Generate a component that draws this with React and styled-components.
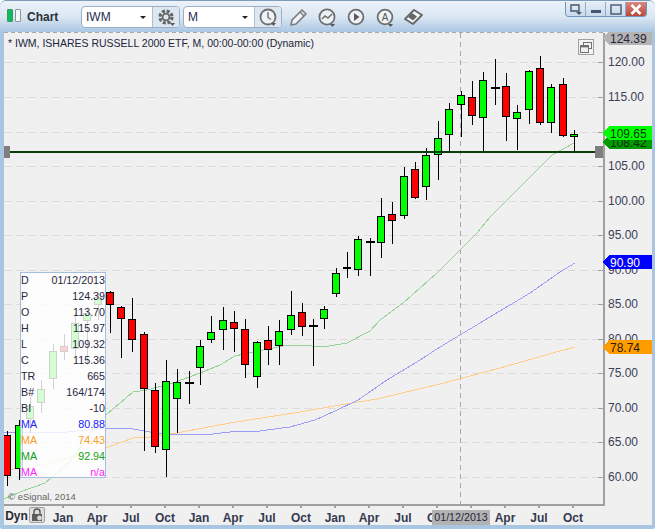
import styled, { createGlobalStyle } from "styled-components";

const UP = "#00ff00";
const DOWN = "#ff0000";

// x, wick top, body top, body bottom, wick bottom, colour (page pixels)
const candles = [
  [7, 431, 435, 476, 486, DOWN],
  [19, 420, 425, 469, 480, UP],
  [30, 397, 406, 419, 433, UP],
  [41, 380, 389, 403, 413, UP],
  [53, 344, 351, 379, 389, UP],
  [64, 334, 346, 352, 360, DOWN],
  [75, 313, 323, 349, 357, UP],
  [87, 307, 313, 321, 365, UP],
  [98, 293, 297, 305, 320, UP],
  [110, 291, 292, 305, 333, DOWN],
  [121, 306, 307, 319, 358, DOWN],
  [132, 298, 319, 340, 352, DOWN],
  [144, 332, 334, 389, 451, DOWN],
  [155, 383, 390, 447, 453, DOWN],
  [166, 360, 381, 450, 477, UP],
  [177, 369, 382, 399, 433, UP],
  [189, 371, 383, 383, 404, UP],
  [200, 340, 346, 368, 385, UP],
  [211, 316, 332, 340, 343, UP],
  [223, 307, 320, 330, 350, UP],
  [234, 311, 322, 329, 352, DOWN],
  [245, 319, 329, 365, 378, DOWN],
  [257, 341, 342, 377, 388, UP],
  [268, 326, 340, 350, 365, DOWN],
  [279, 320, 331, 346, 365, UP],
  [291, 291, 315, 330, 335, UP],
  [302, 303, 312, 327, 336, DOWN],
  [313, 319, 326, 326, 366, UP],
  [324, 306, 309, 319, 329, UP],
  [336, 268, 273, 294, 297, UP],
  [347, 252, 267, 269, 278, UP],
  [358, 236, 239, 270, 276, UP],
  [370, 238, 242, 242, 276, UP],
  [381, 198, 216, 243, 258, UP],
  [392, 202, 214, 221, 244, DOWN],
  [404, 167, 176, 216, 219, UP],
  [415, 162, 169, 198, 199, DOWN],
  [426, 148, 155, 187, 200, UP],
  [438, 121, 138, 155, 180, UP],
  [449, 103, 109, 135, 152, UP],
  [461, 91, 95, 105, 137, UP],
  [472, 81, 97, 116, 125, DOWN],
  [483, 72, 80, 118, 152, UP],
  [495, 59, 88, 88, 105, UP],
  [506, 73, 86, 117, 141, DOWN],
  [517, 105, 112, 119, 150, UP],
  [529, 70, 71, 110, 124, UP],
  [540, 56, 68, 123, 125, DOWN],
  [551, 84, 87, 123, 133, UP],
  [563, 78, 84, 136, 137, DOWN],
  [574, 130, 134, 137, 152, UP],
];

const greenMa = "4,499 20,492 45,483 70,462 100,420 133,392 147,390 173,383 200,373 220,365 235,356 253,352 283,346 300,345 323,347 347,343 370,331 380,320 403,303 420,288 437,273 460,250 477,233 490,217 527,180 552,155 574,143";
const blueMa = "4,432 67,432 107,428 133,429 150,432 162,434 190,435 213,434 230,432 260,431 290,427 315,420 335,411 358,400 387,380 420,360 440,347 480,323 530,293 560,272 575,263";
const orangeMa = "3,470 33,467 100,450 133,438 150,437 177,433 203,428 230,423 300,412 340,405 377,399 440,384 500,368 560,351 575,347";

const levels = [120, 115, 110, 105, 100, 95, 90, 85, 80, 75, 70, 65, 60];
const levelY = (p) => Math.round(477 - (p - 60) * 6.91);

const flags = [
  { value: "124.39", y: 38, fill: "#b4b4b4", text: "#26263c" },
  { value: "108.42", y: 142, fill: "#009c00", text: "#10300a" },
  { value: "109.65", y: 133, fill: "#00ff00", text: "#10300a" },
  { value: "90.90", y: 262, fill: "#0000ff", text: "#ffffff" },
  { value: "78.74", y: 347, fill: "#ff9c00", text: "#2a1c00" },
];

const readout = [
  ["D", "01/12/2013"],
  ["P", "124.39"],
  ["O", "113.70"],
  ["H", "115.97"],
  ["L", "109.32"],
  ["C", "115.36"],
  ["TR", "665"],
  ["B#", "164/174"],
  ["BI", "-10"],
  ["MA", "80.88", "#2020ff"],
  ["MA", "74.43", "#ff9c20"],
  ["MA", "92.94", "#10a010"],
  ["MA", "n/a", "#ff20ff"],
];

const months = ["Jan", "Apr", "Jul", "Oct", "Jan", "Apr", "Jul", "Oct", "Jan", "Apr", "Jul", "Oct", "Jan", "Apr", "Jul", "Oct"];

const Candle = ({ data }) => {
  const [x, wickTop, bodyTop, bodyBottom, wickBottom, colour] = data;
  const cx = x + 0.5;
  return (
    <g>
      <line x1={cx} x2={cx} y1={wickTop} y2={wickBottom} stroke="#000" strokeWidth="1" />
      {bodyTop === bodyBottom ? (
        <rect x={x - 4} y={bodyTop - 1} width="9" height="2" fill="#000" />
      ) : (
        <rect x={x - 3.5} y={bodyTop + 0.5} width="7" height={bodyBottom - bodyTop - 1} fill={colour} stroke="#000" strokeWidth="1" />
      )}
    </g>
  );
};

const Flag = ({ value, y, fill, text }) => (
  <g>
    <polygon points={`603,${y} 609,${y - 7} 652,${y - 7} 652,${y + 7} 609,${y + 7}`} fill={fill} />
    <text x="610" y={y + 4.5} fill={text} fontSize="12">{value}</text>
  </g>
);

const PriceChart = () => (
  <PlotSvg viewBox="4 32 648 474" width="648" height="474" shapeRendering="crispEdges" fontFamily="Liberation Sans, Arial, sans-serif">
    {levels.map((p) => (
      <line key={p} x1="4" x2="603" y1={levelY(p) + 0.5} y2={levelY(p) + 0.5} stroke="#dcdcdc" strokeWidth="1" strokeDasharray="8 4" />
    ))}
    <line x1="4" x2="603" y1="32.5" y2="32.5" stroke="#a8a8a8" strokeDasharray="4 3" />
    <line x1="460.5" x2="460.5" y1="33" y2="505" stroke="#a8a8a8" strokeDasharray="5 4" />
    <g fill="none" strokeWidth="1">
      <polyline points={orangeMa} stroke="#ffcc8a" />
      <polyline points={blueMa} stroke="#9c9cf2" />
      <polyline points={greenMa} stroke="#96d296" />
    </g>
    {candles.map((c) => <Candle key={c[0]} data={c} />)}
    <rect x="4" y="151" width="599" height="2" fill="#0a3d0a" />
    <rect x="4" y="146" width="6" height="12" fill="#7f7f7f" />
    <rect x="595" y="146" width="8" height="12" fill="#7f7f7f" />
    <rect x="603" y="33" width="2" height="473" fill="#a0a0a0" />
    <rect x="4" y="504" width="600" height="2" fill="#a0a0a0" />
    {levels.map((p) => (
      <g key={p}>
        <line x1="598" x2="603" y1={levelY(p) + 0.5} y2={levelY(p) + 0.5} stroke="#a0a0a0" />
        <text x="608" y={levelY(p) + 4} fill="#3a3f58" fontSize="12">{p}.00</text>
      </g>
    ))}
    {flags.map((f) => <Flag key={f.value} {...f} />)}
  </PlotSvg>
);

const App = () => (
  <>
    <GlobalStyle />
    <Window>
      <TitleBar>
        <Lights>
          <Light $on />
          <Light />
        </Lights>
        <Title>Chart</Title>
        <ComboGroup>
          <Combo>
            <ComboValue>IWM</ComboValue>
            <Caret />
          </Combo>
          <ComboButton>
            <svg width="20" height="20" viewBox="0 0 20 20">
              <circle cx="10" cy="10" r="6" fill="none" stroke="#666" strokeWidth="3.2" strokeDasharray="3 1.7" />
              <circle cx="10" cy="10" r="3.4" fill="none" stroke="#666" strokeWidth="1.8" />
              <path d="M14 16h5l-2.5 3z" fill="#555" />
            </svg>
          </ComboButton>
        </ComboGroup>
        <ComboGroup>
          <Combo>
            <ComboValue>M</ComboValue>
            <Caret />
          </Combo>
          <ComboButton>
            <svg width="20" height="20" viewBox="0 0 20 20">
              <circle cx="10" cy="10" r="7.5" fill="#eef3f8" stroke="#6e6e6e" strokeWidth="1.8" />
              <path d="M10 5v5.5l3 2" fill="none" stroke="#6e6e6e" strokeWidth="1.4" />
              <path d="M13 16h5l-2.5 3z" fill="#555" />
            </svg>
          </ComboButton>
        </ComboGroup>
        <Tools>
          <ToolIcon viewBox="0 0 20 20">
            <path d="M3 18l1-5L14 3l4 4L8 17z" fill="#eef2f6" stroke="#7a7a7a" strokeWidth="1.6" strokeLinejoin="round" />
            <path d="M12 5l4 4" stroke="#7a7a7a" strokeWidth="1.4" />
          </ToolIcon>
          <ToolIcon viewBox="0 0 20 20">
            <circle cx="10" cy="10" r="7.6" fill="#eef2f6" stroke="#6e6e6e" strokeWidth="1.8" />
            <path d="M5 12l3-3 3 2 4-4" fill="none" stroke="#6e6e6e" strokeWidth="1.5" />
            <path d="M13 17h5l-2.5 3z" fill="#555" />
          </ToolIcon>
          <ToolIcon viewBox="0 0 20 20">
            <circle cx="10" cy="10" r="7.4" fill="#eef2f6" stroke="#6e6e6e" strokeWidth="1.8" />
            <path d="M8 6l5.5 4L8 14z" fill="#5c5c5c" />
          </ToolIcon>
          <ToolIcon viewBox="0 0 20 20">
            <circle cx="10" cy="10" r="7.4" fill="#eef2f6" stroke="#6e6e6e" strokeWidth="1.8" />
            <text x="10" y="13.5" textAnchor="middle" fontSize="10" fontFamily="Liberation Sans, sans-serif" fill="#555">A</text>
            <path d="M13 17h5l-2.5 3z" fill="#555" />
          </ToolIcon>
          <ToolIcon viewBox="0 0 20 20">
            <path d="M1 12l9-9 8 5-9 9z" fill="#f4f6f8" stroke="#666" strokeWidth="1.8" strokeLinejoin="round" />
            <path d="M8 6l5 3.5-4 4-5-3.5z" fill="#666" />
          </ToolIcon>
        </Tools>
        <Caption>
          <CaptionButton>
            <svg width="12" height="11" viewBox="0 0 12 11">
              <path d="M1 1h8v6H1z" fill="none" stroke="#45566e" strokeWidth="1.4" />
              <path d="M6 8h6l-3 3z" fill="#45566e" />
            </svg>
          </CaptionButton>
          <CaptionButton>
            <svg width="12" height="11" viewBox="0 0 12 11"><rect x="1" y="6" width="10" height="3" fill="#45566e" /></svg>
          </CaptionButton>
          <CaptionButton>
            <svg width="12" height="11" viewBox="0 0 12 11">
              <rect x="1" y="1" width="10" height="9" fill="none" stroke="#45566e" strokeWidth="1.4" />
            </svg>
          </CaptionButton>
          <CloseButton>
            <svg width="14" height="11" viewBox="0 0 14 11">
              <path d="M2.5 1l9 9M11.5 1l-9 9" stroke="#fff" strokeWidth="2.6" />
            </svg>
          </CloseButton>
        </Caption>
      </TitleBar>
      <ChartBody>
        <Plot>
          <PriceChart />
          <Legend>* IWM, ISHARES RUSSELL 2000 ETF, M, 00:00-00:00 (Dynamic)</Legend>
          <RestoreButton>
            <svg width="12" height="11" viewBox="0 0 12 11">
              <rect x="3.5" y="0.5" width="8" height="6" fill="none" stroke="#707070" />
              <rect x="0.5" y="3.5" width="8" height="7" fill="#f0f0f0" stroke="#707070" />
              <rect x="1" y="4" width="7" height="1.4" fill="#707070" />
            </svg>
          </RestoreButton>
          <Readout>
            {readout.map(([label, value, colour], i) => (
              <ReadoutRow key={i} $colour={colour}>
                <span>{label}</span>
                <span>{value}</span>
              </ReadoutRow>
            ))}
          </Readout>
          <Copyright>© eSignal, 2014</Copyright>
        </Plot>
        <TimeAxis>
          <Dyn>Dyn</Dyn>
          <LockButton>
            <svg width="14" height="14" viewBox="0 0 14 14">
              <path d="M4 6V4a3 3 0 0 1 6 0v2" fill="none" stroke="#555" strokeWidth="1.4" />
              <rect x="2" y="6" width="10" height="7" fill="#5c5c5c" />
              <circle cx="9.5" cy="10" r="2.4" fill="#d8d8d8" />
            </svg>
          </LockButton>
          {months.map((m, i) => <Month key={i}>{m}</Month>)}
          <CursorDate>01/12/2013</CursorDate>
        </TimeAxis>
      </ChartBody>
    </Window>
  </>
);

const GlobalStyle = createGlobalStyle`
  html, body {
    margin: 0;
    padding: 0;
    background: #fff;
  }
  body {
    font-family: "Liberation Sans", Arial, sans-serif;
    font-size: 12px;
  }
`;

const Window = styled.div`
  width: 655px;
  height: 529px;
  box-sizing: border-box;
  display: flex;
  flex-direction: column;
  padding: 0 3px 4px 4px;
  background: #a8c5e2;
  border-top: 1px solid #7d9cba;
  border-radius: 6px 6px 2px 2px;
  overflow: hidden;
`;

const TitleBar = styled.div`
  flex: none;
  height: 31px;
  margin: 0 -3px 0 -4px;
  padding: 5px 0 0 7px;
  box-sizing: border-box;
  display: flex;
  align-items: flex-start;
  position: relative;
  background: linear-gradient(#ecf2f9 0%, #dce7f3 50%, #aac7e3 100%);
`;

const Lights = styled.div`
  display: flex;
  gap: 2px;
  margin-top: 3px;
`;

const Light = styled.div`
  width: 6px;
  height: 13px;
  box-sizing: border-box;
  border: 1px solid ${(p) => (p.$on ? "#3a9a5a" : "#8a96a4")};
  border-radius: 1px;
  background: ${(p) => (p.$on ? "#10b860" : "#f4f6f8")};
`;

const Title = styled.div`
  width: 54px;
  margin-left: 6px;
  padding-top: 4px;
  font-weight: bold;
  font-size: 12px;
  color: #2a3038;
`;

const ComboGroup = styled.div`
  display: flex;
  height: 22px;
  width: 99px;
  margin: 0 3px 0 0;
  box-sizing: border-box;
  border: 1px solid #9aaec4;
  border-radius: 4px;
  overflow: hidden;
  background: #fff;
`;

const Combo = styled.div`
  flex: 1;
  display: flex;
  align-items: center;
  justify-content: space-between;
  padding: 0 6px 0 4px;
`;

const ComboValue = styled.span`
  font-size: 12px;
  color: #262a50;
`;

const Caret = styled.span`
  width: 0;
  height: 0;
  border-left: 3px solid transparent;
  border-right: 3px solid transparent;
  border-top: 3px solid #222;
`;

const ComboButton = styled.div`
  width: 26px;
  flex: none;
  display: flex;
  align-items: center;
  justify-content: center;
  background: #dde7f2;
  border-left: 1px solid #aebfd2;
`;

const Tools = styled.div`
  display: flex;
  gap: 9px;
  margin: 1px 0 0 3px;
`;

const ToolIcon = styled.svg`
  width: 20px;
  height: 20px;
`;

const Caption = styled.div`
  position: absolute;
  top: 1px;
  right: 8px;
  display: flex;
  height: 14px;
  border: 1px solid #6f93ba;
  border-top: none;
  border-radius: 0 0 4px 4px;
  overflow: hidden;
`;

const CaptionButton = styled.div`
  width: 19px;
  display: flex;
  align-items: center;
  justify-content: center;
  background: linear-gradient(#e6eef7, #c8d9ea);
  border-right: 1px solid #8fabc8;
`;

const CloseButton = styled.div`
  width: 20px;
  display: flex;
  align-items: center;
  justify-content: center;
  background: linear-gradient(#d88a80, #b9483c);
`;

const ChartBody = styled.div`
  flex: 1;
  display: flex;
  flex-direction: column;
  background: #f0f0f0;
`;

const Plot = styled.div`
  position: relative;
  height: 474px;
  flex: none;
`;

const PlotSvg = styled.svg`
  display: block;
`;

const Legend = styled.div`
  position: absolute;
  left: 4px;
  top: 5px;
  font-size: 10.5px;
  color: #20243c;
  white-space: nowrap;
`;

const RestoreButton = styled.div`
  position: absolute;
  left: 574px;
  top: 7px;
  width: 14px;
  height: 14px;
  display: flex;
  align-items: center;
  justify-content: center;
  border: 1px solid #a0a0a0;
  background: #f4f4f4;
`;

const Readout = styled.div`
  position: absolute;
  left: 16px;
  top: 240px;
  width: 86px;
  height: 206px;
  box-sizing: border-box;
  border: 1px solid #a4bedb;
  background: rgba(255, 255, 255, 0.82);
`;

const ReadoutRow = styled.div`
  display: flex;
  justify-content: space-between;
  height: 16px;
  line-height: 15px;
  font-size: 10.7px;
  color: ${(p) => p.$colour || "#26263c"};
`;

const Copyright = styled.div`
  position: absolute;
  left: 4px;
  top: 459px;
  font-size: 9.5px;
  color: #666;
`;

const TimeAxis = styled.div`
  flex: 1;
  position: relative;
  display: flex;
  align-items: flex-start;
`;

const Dyn = styled.div`
  width: 25px;
  padding-top: 3px;
  font-weight: bold;
  font-size: 12px;
  color: #2a2a30;
  text-align: center;
`;

const LockButton = styled.div`
  width: 16px;
  height: 16px;
  margin: 1px 1px 0 0;
  display: flex;
  align-items: center;
  justify-content: center;
  border: 1px solid #a0a0a0;
  border-radius: 2px;
  box-sizing: border-box;
  background: #dedede;
`;

const Month = styled.div`
  width: 34px;
  flex: none;
  position: relative;
  padding-top: 5px;
  text-align: center;
  font-weight: bold;
  font-size: 12px;
  color: #343a50;
  &::before {
    content: "";
    position: absolute;
    left: 16px;
    top: 0;
    width: 2px;
    height: 2px;
    background: #a0a0a0;
  }
`;

const CursorDate = styled.div`
  position: absolute;
  left: 428px;
  top: 4px;
  width: 58px;
  height: 15px;
  line-height: 15px;
  text-align: center;
  font-size: 10.7px;
  background: #b2b2b2;
  color: #26263c;
`;

export default App;
